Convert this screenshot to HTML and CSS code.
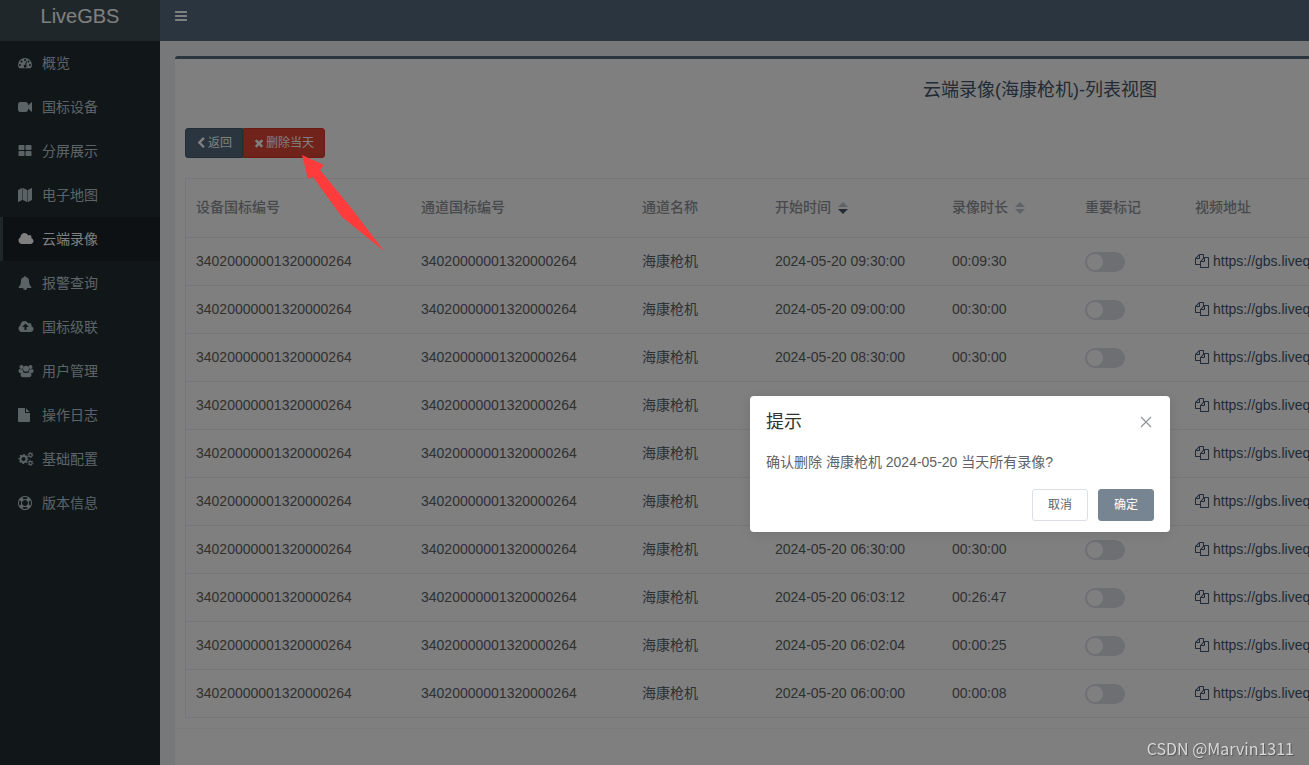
FILE: index.html
```
<!DOCTYPE html>
<html lang="zh-CN">
<head>
<meta charset="utf-8">
<title>LiveGBS</title>
<link rel="stylesheet" href="styles.css">
</head>
<body>
<svg class="sprite" aria-hidden="true">
  <symbol id="bars" viewBox="0 0 1792 1792"><path d="M1664 1344v128q0 26-19 45t-45 19h-1408q-26 0-45-19t-19-45v-128q0-26 19-45t45-19h1408q26 0 45 19t19 45zm0-512v128q0 26-19 45t-45 19h-1408q-26 0-45-19t-19-45v-128q0-26 19-45t45-19h1408q26 0 45 19t19 45zm0-512v128q0 26-19 45t-45 19h-1408q-26 0-45-19t-19-45v-128q0-26 19-45t45-19h1408q26 0 45 19t19 45z"/></symbol>
  <symbol id="gauge" viewBox="0 0 1792 1792"><path fill-rule="evenodd" d="M896 256a896 896 0 0 1 896 896q0 200-150 384-20 20-50 20H200q-30 0-50-20Q0 1352 0 1152A896 896 0 0 1 896 256zM256 1024a128 128 0 1 0 0 256 128 128 0 0 0 0-256zM448 576a128 128 0 1 0 0 256 128 128 0 0 0 0-256zM896 384a128 128 0 1 0 0 256 128 128 0 0 0 0-256zM1344 576a128 128 0 1 0 0 256 128 128 0 0 0 0-256zM1536 1024a128 128 0 1 0 0 256 128 128 0 0 0 0-256zM1010 730l-101 382a192 192 0 1 0 124 33l101-382a64 64 0 0 0-124-33z"/></symbol>
  <symbol id="video" viewBox="0 0 1792 1792"><path d="M1792 352v1088q0 42-39 59-13 5-25 5-27 0-45-19l-403-403v166q0 119-84.500 203.500t-203.500 84.500h-704q-119 0-203.500-84.500t-84.500-203.500v-704q0-119 84.500-203.500t203.500-84.500h704q119 0 203.500 84.500t84.500 203.500v165l403-402q18-19 45-19 12 0 25 5 39 17 39 59z"/></symbol>
  <symbol id="grid" viewBox="0 0 1792 1792"><path d="M832 1024v384q0 52-38 90t-90 38h-512q-52 0-90-38t-38-90v-384q0-52 38-90t90-38h512q52 0 90 38t38 90zm0-768v384q0 52-38 90t-90 38h-512q-52 0-90-38t-38-90v-384q0-52 38-90t90-38h512q52 0 90 38t38 90zm896 768v384q0 52-38 90t-90 38h-512q-52 0-90-38t-38-90v-384q0-52 38-90t90-38h512q52 0 90 38t38 90zm0-768v384q0 52-38 90t-90 38h-512q-52 0-90-38t-38-90v-384q0-52 38-90t90-38h512q52 0 90 38t38 90z"/></symbol>
  <symbol id="map" viewBox="0 0 1792 1792"><path d="M512 0q13 0 22.500 9.500t9.500 22.500v1472q0 20-17 28l-480 256q-7 4-15 4-13 0-22.500-9.500t-9.500-22.500v-1472q0-20 17-28l480-256q7-4 15-4zm1248 0q13 0 22.500 9.500t9.500 22.500v1472q0 20-17 28l-480 256q-7 4-15 4-13 0-22.500-9.500t-9.500-22.500v-1472q0-20 17-28l480-256q7-4 15-4zm-1120 0q8 0 14 3l512 256q18 10 18 29v1472q0 13-9.500 22.500t-22.500 9.500q-8 0-14-3l-512-256q-18-10-18-29v-1472q0-13 9.500-22.500t22.500-9.500z"/></symbol>
  <symbol id="cloud" viewBox="0 0 2048 1792"><path d="M1984 1152q0 159-112.500 271.500t-271.500 112.500h-1088q-185 0-316.500-131.500t-131.500-316.500q0-132 71-241.500t187-163.500q-2-28-2-43 0-212 150-362t362-150q158 0 286.500 88t187.500 230q70-62 166-62 106 0 181 75t75 181q0 75-41 138 129 30 213 134.500t84 239.500z"/></symbol>
  <symbol id="bell" viewBox="0 0 1792 1792"><path d="M912 1696q0-16-16-16-59 0-101.500-42.500t-42.500-101.500q0-16-16-16t-16 16q0 73 51.500 124.500t124.500 51.500q16 0 16-16zm816-288q0 52-38 90t-90 38h-448q0 106-75 181t-181 75-181-75-75-181h-448q-52 0-90-38t-38-90q50-42 91-88t85-119.500 74.500-158.500 50-206 19.500-260q0-152 117-282.500t307-158.500q-8-19-8-39 0-40 28-68t68-28 68 28 28 68q0 20-8 39 190 28 307 158.500t117 282.500q0 139 19.500 260t50 206 74.500 158.500 85 119.500 91 88z"/></symbol>
  <symbol id="upload" viewBox="0 0 2048 1792"><path fill-rule="evenodd" d="M1344 864q0-14-9-23l-352-352q-9-9-23-9t-23 9l-351 351q-10 12-10 24 0 14 9 23t23 9h224v352q0 13 9.500 22.500t22.500 9.500h192q13 0 22.500-9.500t9.500-22.500v-352h224q13 0 22.500-9.500t9.500-22.500zm640 288q0 159-112.500 271.500t-271.500 112.500h-1088q-185 0-316.500-131.500t-131.500-316.500q0-130 70-240t188-165q-2-30-2-43 0-212 150-362t362-150q156 0 285.500 87t188.500 231q71-62 166-62 106 0 181 75t75 181q0 76-41 138 130 31 213.500 135.500t83.500 238.500z"/></symbol>
  <symbol id="users" viewBox="0 0 1920 1792"><circle cx="384" cy="384" r="256"/><circle cx="1536" cy="384" r="256"/><circle cx="960" cy="620" r="384"/><path d="M0 930q0-290 160-290 90 60 230 60 90 0 150-30-20 230 90 360-170 10-266 120H190Q0 1150 0 930zM1920 930q0-290-160-290-90 60-230 60-90 0-150-30 20 230-90 360 170 10 266 120h174q190 0 190-220zM256 1420q0-370 260-400 190 140 444 140t444-140q260 30 260 400 0 264-266 264H522q-266 0-266-264z"/></symbol>
  <symbol id="file" viewBox="0 0 1792 1792"><path d="M1024 512v-472q22 14 36 28l408 408q14 14 28 36h-472zm-128 32q0 40 28 68t68 28h544v1056q0 40-28 68t-68 28H96q-40 0-68-28T0 1696V96q0-40 28-68T96 0h800v544z"/></symbol>
  <symbol id="cogs" viewBox="0 0 1920 1792"><g fill="none" stroke="currentColor"><circle cx="640" cy="896" r="395" stroke-width="250"/><circle cx="640" cy="896" r="570" stroke-width="150" stroke-dasharray="224 224" stroke-dashoffset="112"/><circle cx="1536" cy="384" r="205" stroke-width="140"/><circle cx="1536" cy="384" r="320" stroke-width="120" stroke-dasharray="168 167"/><circle cx="1536" cy="1408" r="205" stroke-width="140"/><circle cx="1536" cy="1408" r="320" stroke-width="120" stroke-dasharray="168 167"/></g></symbol>
  <symbol id="ring" viewBox="0 0 1792 1792"><path fill-rule="evenodd" d="M896 0q182 0 348 71t286 191 191 286 71 348-71 348-191 286-286 191-348 71-348-71-286-191-191-286-71-348 71-348 191-286 286-191 348-71zm0 128q-190 0-361 90l194 194q82-28 167-28t167 28l194-194q-171-90-361-90zm-678 1129l194-194q-28-82-28-167t28-167l-194-194q-90 171-90 361t90 361zm678 407q190 0 361-90l-194-194q-82 28-167 28t-167-28l-194 194q171 90 361 90zm0-384q159 0 271.500-112.500t112.500-271.500-112.500-271.500-271.500-112.500-271.500 112.500-112.500 271.500 112.500 271.500 271.500 112.500zm484-217l194 194q90-171 90-361t-90-361l-194 194q28 82 28 167t-28 167z"/></symbol>
  <symbol id="left" viewBox="0 0 1280 1792"><path d="M1171 301l-531 531 531 531q19 19 19 45t-19 45l-166 166q-19 19-45 19t-45-19l-742-742q-19-19-19-45t19-45l742-742q19-19 45-19t45 19l166 166q19 19 19 45t-19 45z"/></symbol>
  <symbol id="times" viewBox="190 0 1408 1792"><path d="M1490 1322q0 40-28 68l-136 136q-28 28-68 28t-68-28l-294-294-294 294q-28 28-68 28t-68-28l-136-136q-28-28-28-68t28-68l294-294-294-294q-28-28-28-68t28-68l136-136q28-28 68-28t68 28l294 294 294-294q28-28 68-28t68 28l136 136q28 28 28 68t-28 68l-294 294 294 294q28 28 28 68z"/></symbol>
  <symbol id="copy" viewBox="0 0 1792 1792"><path d="M1696 384q40 0 68 28t28 68v1216q0 40-28 68t-68 28h-960q-40 0-68-28t-28-68v-288h-544q-40 0-68-28t-28-68v-672q0-40 20-88t48-76l408-408q28-28 76-48t88-20h416q40 0 68 28t28 68v328q68-40 128-40h416zm-544 213l-299 299h299v-299zm-640-384l-299 299h299v-299zm196 647l316-316v-416h-384v416q0 40-28 68t-68 28h-416v640h512v-256q0-40 20-88t48-76zm956 804v-1152h-384v416q0 40-28 68t-68 28h-416v640h896z"/></symbol>
  <symbol id="close" viewBox="0 0 12 12"><path d="M1 1l10 10M11 1L1 11" fill="none" stroke="currentColor" stroke-width="1.200"/></symbol>
</svg>

<div class="app">
  <aside class="sidebar">
    <a class="logo" href="#">LiveGBS</a>
    <nav class="menu">
      <a class="menu-item" href="#"><svg class="icon"><use href="#gauge"/></svg>概览</a>
      <a class="menu-item" href="#"><svg class="icon"><use href="#video"/></svg>国标设备</a>
      <a class="menu-item" href="#"><svg class="icon"><use href="#grid"/></svg>分屏展示</a>
      <a class="menu-item" href="#"><svg class="icon"><use href="#map"/></svg>电子地图</a>
      <a class="menu-item active" href="#" aria-current="page"><svg class="icon wide"><use href="#cloud"/></svg>云端录像</a>
      <a class="menu-item" href="#"><svg class="icon"><use href="#bell"/></svg>报警查询</a>
      <a class="menu-item" href="#"><svg class="icon wide"><use href="#upload"/></svg>国标级联</a>
      <a class="menu-item" href="#"><svg class="icon wide"><use href="#users"/></svg>用户管理</a>
      <a class="menu-item" href="#"><svg class="icon"><use href="#file"/></svg>操作日志</a>
      <a class="menu-item" href="#"><svg class="icon wide"><use href="#cogs"/></svg>基础配置</a>
      <a class="menu-item" href="#"><svg class="icon"><use href="#ring"/></svg>版本信息</a>
    </nav>
  </aside>

  <div class="page">
    <header class="navbar">
      <button class="toggle" type="button" aria-label="切换菜单"><svg class="icon"><use href="#bars"/></svg></button>
    </header>
    <main class="content">
      <section class="box">
        <h1 class="box-title">云端录像(海康枪机)-列表视图</h1>
        <div class="box-body">
          <div class="actions">
            <button class="btn btn-back" type="button"><svg class="btn-icon narrow"><use href="#left"/></svg>返回</button>
            <button class="btn btn-delete" type="button"><svg class="btn-icon"><use href="#times"/></svg>删除当天</button>
            <svg class="pointer" viewBox="0 0 86 100" aria-hidden="true"><path d="M2 2L24 12 20 17 52 56 84 98 42 64 13 24 8 26z"/></svg>
          </div>
          <table class="records">
            <colgroup><col class="c-device"><col class="c-channel"><col class="c-name"><col class="c-start"><col class="c-length"><col class="c-mark"><col></colgroup>
            <thead>
              <tr><th>设备国标编号</th><th>通道国标编号</th><th>通道名称</th><th>开始时间<span class="sort desc"></span></th><th>录像时长<span class="sort"></span></th><th>重要标记</th><th>视频地址</th></tr>
            </thead>
            <tbody>
              <tr><td>34020000001320000264</td><td>34020000001320000264</td><td>海康枪机</td><td>2024-05-20 09:30:00</td><td>00:09:30</td><td class="mark"><input class="switch" type="checkbox" aria-label="重要标记"></td><td><a class="url" href="#"><svg class="icon"><use href="#copy"/></svg>https://gbs.liveqing.com</a></td></tr>
              <tr><td>34020000001320000264</td><td>34020000001320000264</td><td>海康枪机</td><td>2024-05-20 09:00:00</td><td>00:30:00</td><td class="mark"><input class="switch" type="checkbox" aria-label="重要标记"></td><td><a class="url" href="#"><svg class="icon"><use href="#copy"/></svg>https://gbs.liveqing.com</a></td></tr>
              <tr><td>34020000001320000264</td><td>34020000001320000264</td><td>海康枪机</td><td>2024-05-20 08:30:00</td><td>00:30:00</td><td class="mark"><input class="switch" type="checkbox" aria-label="重要标记"></td><td><a class="url" href="#"><svg class="icon"><use href="#copy"/></svg>https://gbs.liveqing.com</a></td></tr>
              <tr><td>34020000001320000264</td><td>34020000001320000264</td><td>海康枪机</td><td></td><td></td><td></td><td><a class="url" href="#"><svg class="icon"><use href="#copy"/></svg>https://gbs.liveqing.com</a></td></tr>
              <tr><td>34020000001320000264</td><td>34020000001320000264</td><td>海康枪机</td><td></td><td></td><td></td><td><a class="url" href="#"><svg class="icon"><use href="#copy"/></svg>https://gbs.liveqing.com</a></td></tr>
              <tr><td>34020000001320000264</td><td>34020000001320000264</td><td>海康枪机</td><td></td><td></td><td></td><td><a class="url" href="#"><svg class="icon"><use href="#copy"/></svg>https://gbs.liveqing.com</a></td></tr>
              <tr><td>34020000001320000264</td><td>34020000001320000264</td><td>海康枪机</td><td>2024-05-20 06:30:00</td><td>00:30:00</td><td class="mark"><input class="switch" type="checkbox" aria-label="重要标记"></td><td><a class="url" href="#"><svg class="icon"><use href="#copy"/></svg>https://gbs.liveqing.com</a></td></tr>
              <tr><td>34020000001320000264</td><td>34020000001320000264</td><td>海康枪机</td><td>2024-05-20 06:03:12</td><td>00:26:47</td><td class="mark"><input class="switch" type="checkbox" aria-label="重要标记"></td><td><a class="url" href="#"><svg class="icon"><use href="#copy"/></svg>https://gbs.liveqing.com</a></td></tr>
              <tr><td>34020000001320000264</td><td>34020000001320000264</td><td>海康枪机</td><td>2024-05-20 06:02:04</td><td>00:00:25</td><td class="mark"><input class="switch" type="checkbox" aria-label="重要标记"></td><td><a class="url" href="#"><svg class="icon"><use href="#copy"/></svg>https://gbs.liveqing.com</a></td></tr>
              <tr><td>34020000001320000264</td><td>34020000001320000264</td><td>海康枪机</td><td>2024-05-20 06:00:00</td><td>00:00:08</td><td class="mark"><input class="switch" type="checkbox" aria-label="重要标记"></td><td><a class="url" href="#"><svg class="icon"><use href="#copy"/></svg>https://gbs.liveqing.com</a></td></tr>
            </tbody>
          </table>
        </div>
      </section>
    </main>
  </div>

  <div class="overlay">
    <div class="dialog" role="dialog" aria-modal="true" aria-labelledby="dialog-title">
      <div class="dialog-head">
        <h2 class="dialog-title" id="dialog-title">提示</h2>
        <button class="dialog-close" type="button" aria-label="关闭"><svg class="close-icon"><use href="#close"/></svg></button>
      </div>
      <p class="dialog-text">确认删除 海康枪机 2024-05-20 当天所有录像?</p>
      <div class="dialog-foot">
        <button class="dialog-btn" type="button">取消</button>
        <button class="dialog-btn primary" type="button">确定</button>
      </div>
    </div>
  </div>
</div>
<div class="watermark">CSDN @Marvin1311</div>
</body>
</html>
```
FILE: styles.css
```
* { box-sizing: border-box; }
body {
  margin: 0;
  overflow: hidden;
  font: 14px/20px "Liberation Sans", "Noto Sans CJK SC", sans-serif;
  color: #606266;
}
button { font: inherit; cursor: pointer; }
a { color: inherit; text-decoration: none; }
.sprite { position: absolute; width: 0; height: 0; }
.icon { width: 14px; height: 14px; flex: none; fill: currentColor; }
.icon.wide { width: 16px; }

/* Desktop layout keeps a wide minimum; narrow windows crop the right side */
.app {
  position: relative;
  display: flex;
  min-width: 1920px;
  min-height: 100vh;
}
.sidebar { width: 160px; flex: none; background: #222d32; }
.logo {
  display: block;
  height: 41px;
  background: #3f4f57;
  color: #fff;
  font-size: 20px;
  line-height: 32px;
  text-align: center;
}
.menu-item {
  display: flex;
  align-items: center;
  height: 44px;
  padding-left: 15px;
  border-left: 3px solid transparent;
  color: #b8c7ce;
}
.menu-item .icon { margin-right: 10px; }
.menu-item .icon.wide { margin-right: 8px; }
.menu-item.active { background: #1a2226; border-left-color: #3f4f57; color: #fff; }

.page { flex: 1; display: flex; flex-direction: column; background: #ecf0f5; }
.navbar { height: 41px; background: #566a80; }
.toggle {
  display: flex;
  align-items: center;
  height: 32px;
  padding: 0 14px;
  border: 0;
  background: none;
  color: #fff;
}
.content { flex: 1; display: flex; padding: 15px 15px 0; }
.box {
  flex: 1;
  border-top: 3px solid #566a80;
  border-radius: 3px 3px 0 0;
  background: #fff;
}
.box-title {
  margin: 0;
  padding: 21px 0 18px;
  font-size: 18px;
  font-weight: 400;
  line-height: 20px;
  text-align: center;
  color: #44566c;
}
.box-body { padding: 10px; border-bottom: 1px solid #f4f4f4; }
.actions { position: relative; display: flex; margin-bottom: 20px; }
.btn {
  display: flex;
  align-items: center;
  gap: 2px;
  height: 30px;
  padding: 0 10px;
  border: 1px solid #475a70;
  color: #fff;
  font-size: 12px;
}
.btn-back { border-radius: 3px 0 0 3px; background: #566a80; }
.btn-delete { border-color: #d73925; border-radius: 0 3px 3px 0; background: #e04634; }
.btn-icon { width: 10px; height: 12px; fill: currentColor; }
/* Callout arrow stays bright above the dimmed page */
.pointer {
  position: absolute;
  z-index: 2;
  top: 25px;
  left: 115px;
  width: 86px;
  height: 100px;
  fill: #ff3b3b;
}

.records {
  width: 100%;
  table-layout: fixed;
  border-collapse: separate;
  border-spacing: 0;
  border: 1px solid #ebeef5;
  border-bottom: 0;
}
.c-device { width: 225px; }
.c-channel { width: 221px; }
.c-name { width: 133px; }
.c-start { width: 177px; }
.c-length { width: 133px; }
.c-mark { width: 110px; }
.records th, .records td {
  height: 48px;
  padding: 0 10px 2px;
  border-bottom: 1px solid #ebeef5;
  text-align: left;
  vertical-align: middle;
}
.records .mark { padding-bottom: 0; }
.records th { height: 59px; color: #909399; font-weight: 500; }
.sort {
  display: inline-grid;
  gap: 2px;
  margin-left: 7px;
  vertical-align: middle;
}
.sort::before, .sort::after { content: ""; border: 5px solid transparent; }
.sort::before { border-top: 0; border-bottom-color: #c0c4cc; }
.sort::after { border-bottom: 0; border-top-color: #c0c4cc; }
.sort.desc::after { border-top-color: #44566c; }
.switch {
  appearance: none;
  display: block;
  width: 40px;
  height: 20px;
  margin: 0;
  padding: 2px;
  border-radius: 10px;
  background: #dcdfe6;
}
.switch::before {
  content: "";
  display: block;
  width: 16px;
  height: 16px;
  border-radius: 50%;
  background: #fff;
}
.url { display: flex; align-items: center; gap: 4px; color: #44566c; }

.overlay {
  position: absolute;
  z-index: 1;
  inset: 0;
  display: flex;
  justify-content: center;
  align-items: flex-start;
  padding-top: 396px;
  background: rgba(0, 0, 0, .5);
}
.dialog {
  width: 420px;
  padding: 16px 16px 11px;
  border-radius: 4px;
  background: #fff;
  box-shadow: 0 2px 12px rgba(0, 0, 0, .1);
}
.dialog-head { display: flex; justify-content: space-between; align-items: center; }
.dialog-title { margin: 0; font-size: 18px; font-weight: 400; line-height: 20px; color: #303133; }
.dialog-close { display: flex; padding: 2px; border: 0; background: none; color: #909399; }
.close-icon { width: 12px; height: 12px; }
.dialog-text { margin: 20px 0 17px; }
.dialog-foot { display: flex; justify-content: flex-end; gap: 10px; }
.dialog-btn {
  width: 56px;
  height: 32px;
  padding: 0;
  border: 1px solid #dcdfe6;
  border-radius: 3px;
  background: #fff;
  color: #606266;
  font-size: 12px;
}
.dialog-btn.primary { border-color: #778593; background: #778593; color: #fff; }
.watermark {
  position: fixed;
  z-index: 3;
  right: 15px;
  bottom: 7px;
  color: #d8d8d8;
  font: 16px/20px "Noto Sans CJK SC", sans-serif;
  text-shadow: 1px 1px 1px #555;
}
```
